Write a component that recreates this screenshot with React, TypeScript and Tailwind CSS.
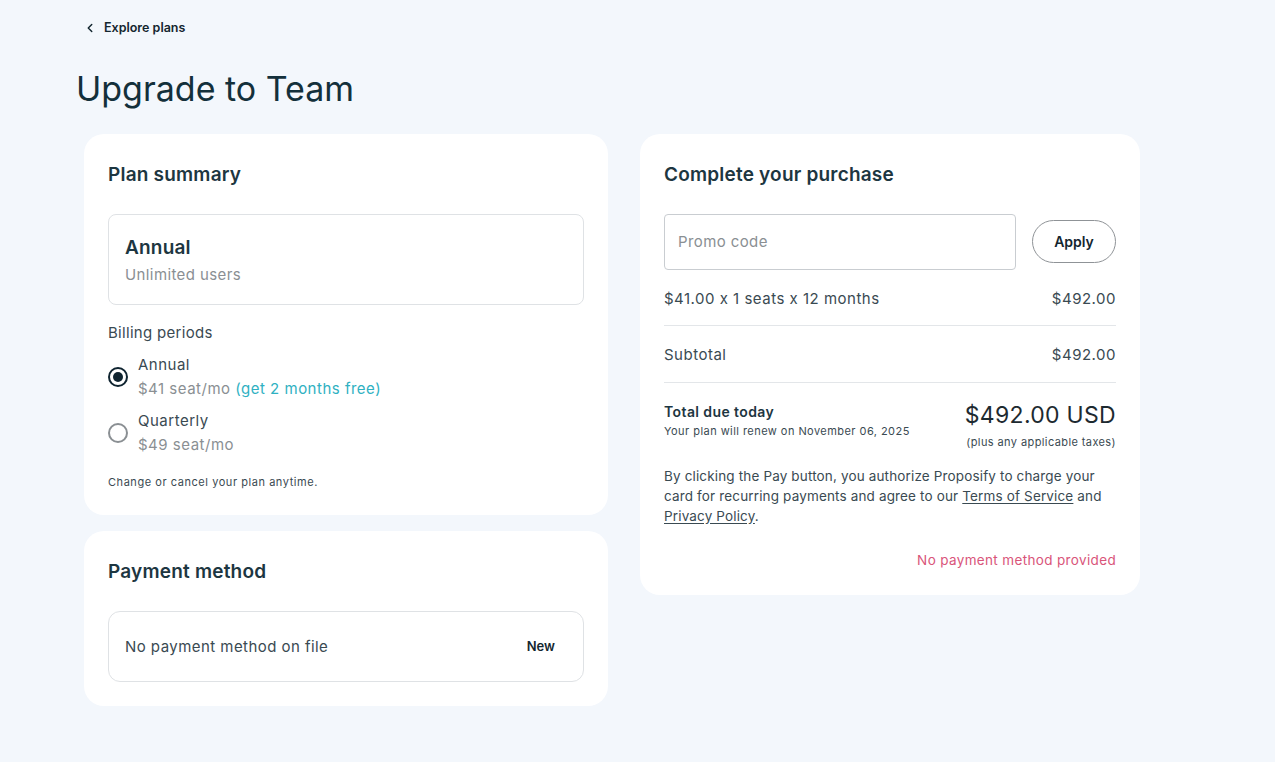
import { ChevronLeft } from "lucide-react";

const ink = "text-[#1d3641]";

function Radio({ checked }: { checked: boolean }) {
  return checked ? (
    <span className="flex h-5 w-5 shrink-0 items-center justify-center rounded-full border-2 border-[#0f2430]">
      <span className="h-2.5 w-2.5 rounded-full bg-[#0f2430]" />
    </span>
  ) : (
    <span className="h-5 w-5 shrink-0 rounded-full border-2 border-[#8a8f93]" />
  );
}

export default function App() {
  return (
    <div
      className={`min-h-screen bg-[#f3f7fc] ${ink} [font-feature-settings:'calt'_0]`}
      style={{ fontFamily: "Inter, 'Noto Sans', sans-serif" }}
    >
      <div className="px-[76px] pt-[19px]">
        <a href="#" className="flex items-center gap-[7px] pl-[7px] text-[12.5px] font-semibold text-[#13262f]">
          <ChevronLeft className="h-[14px] w-[14px]" strokeWidth={2.5} />
          Explore plans
        </a>
        <h1 className="mt-[31px] text-[34px] font-normal leading-[40px] text-[#13303b]">
          Upgrade to Team
        </h1>

        <div className="mt-[25px] ml-[8px] flex items-start gap-8">
          {/* left column */}
          <div className="flex w-[524px] flex-col gap-4">
            <section className="rounded-[20px] bg-white px-6 pt-[27px] pb-[25px]">
              <h2 className="text-[19px] font-semibold leading-7 tracking-[0.2px]">Plan summary</h2>
              <div className="mt-[25px] rounded-lg border border-[#dfe2e5] px-4 pt-[19px] pb-[17px]">
                <div className="text-[19px] font-semibold leading-7 tracking-[0.2px]">Annual</div>
                <div className="mt-[1px] text-[15px] leading-6 tracking-[0.4px] text-[#8a8f93]">Unlimited users</div>
              </div>
              <div className="mt-[16px] text-[15px] leading-6 tracking-[0.3px] text-[#3a4a52]">Billing periods</div>
              <div className="mt-[8px] flex items-center gap-[10px]">
                <Radio checked />
                <div className="tracking-[0.5px]">
                  <div className="text-[15px] leading-6 text-[#3a4a52]">Annual</div>
                  <div className="text-[15px] leading-6 text-[#8a8f93]">
                    $41 seat/mo <span className="text-[#2fb1c2]">(get 2 months free)</span>
                  </div>
                </div>
              </div>
              <div className="mt-[8px] flex items-center gap-[10px]">
                <Radio checked={false} />
                <div className="tracking-[0.5px]">
                  <div className="text-[15px] leading-6 text-[#3a4a52]">Quarterly</div>
                  <div className="text-[15px] leading-6 text-[#8a8f93]">$49 seat/mo</div>
                </div>
              </div>
              <p className="mt-[17px] text-[11px] leading-4 tracking-[0.55px] text-[#3a4a52]">
                Change or cancel your plan anytime.
              </p>
            </section>

            <section className="rounded-[20px] bg-white px-6 pt-[27px] pb-6">
              <h2 className="text-[19px] font-semibold leading-7 tracking-[0.2px]">Payment method</h2>
              <div className="mt-[25px] flex h-[71px] items-center justify-between rounded-xl border border-[#dfe2e5] pl-4 pr-7">
                <span className="pt-[2px] text-[15px] tracking-[0.45px] text-[#3a4a52]">No payment method on file</span>
                <span className="text-[13px] font-semibold text-[#13262f]">New</span>
              </div>
            </section>
          </div>

          {/* right column */}
          <section className="w-[500px] rounded-[20px] bg-white px-6 pt-[27px] pb-[25px]">
            <h2 className="text-[19px] font-semibold leading-7 tracking-[0.2px]">Complete your purchase</h2>
            <div className="mt-[25px] flex items-center gap-4">
              <input
                placeholder="Promo code"
                className="h-[56px] w-[352px] rounded border border-[#c9cdd1] px-[13px] text-[15px] tracking-[0.4px] outline-none placeholder:text-[#8a8f93]"
              />
              <button className="h-[43px] w-[84px] rounded-full border border-[#8f9397] text-[14px] font-semibold text-[#13262f]">
                Apply
              </button>
            </div>
            <div className="flex h-[56px] items-center justify-between border-b border-[#e3e6e9] pt-[3px] text-[15px] tracking-[0.5px] text-[#3a4a52]">
              <span>$41.00 x 1 seats x 12 months</span>
              <span>$492.00</span>
            </div>
            <div className="flex h-[57px] items-center justify-between border-b border-[#e3e6e9] pt-[3px] text-[15px] tracking-[0.5px] text-[#3a4a52]">
              <span>Subtotal</span>
              <span>$492.00</span>
            </div>
            <div className="mt-[17px] flex items-start justify-between">
              <div>
                <div className="text-[14px] font-semibold leading-[24px] tracking-[0.4px]">Total due today</div>
                <div className="text-[11px] leading-[15px] tracking-[0.45px] text-[#3a4a52]">
                  Your plan will renew on November 06, 2025
                </div>
              </div>
              <div className="text-right">
                <div className="text-[23px] leading-[30px] tracking-[0.3px] text-[#1d2a30]">$492.00 USD</div>
                <div className="mt-[5px] text-[11px] leading-[14px] tracking-[0.4px] text-[#3a4a52]">(plus any applicable taxes)</div>
              </div>
            </div>
            <p className="mt-[17px] text-[13.5px] leading-5 tracking-[0.15px] text-[#3a4a52]">
              By clicking the Pay button, you authorize Proposify to charge your card for recurring
              payments and agree to our{" "}
              <a href="#" className="underline underline-offset-2">Terms of Service</a> and{" "}
              <a href="#" className="underline underline-offset-2">Privacy Policy</a>.
            </p>
            <p className="mt-[24px] text-right text-[13.5px] leading-5 tracking-[0.35px] text-[#d9557a]">
              No payment method provided
            </p>
          </section>
        </div>
      </div>
    </div>
  );
}
